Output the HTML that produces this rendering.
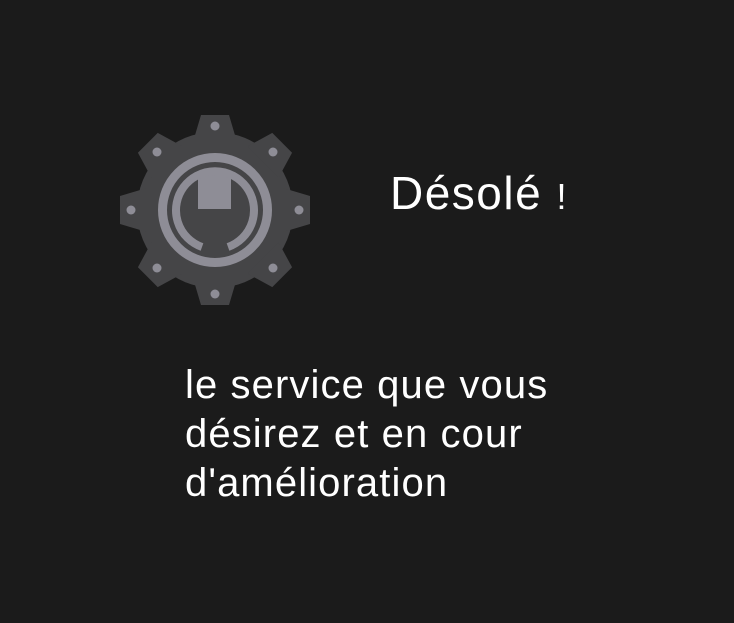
<!DOCTYPE html>
<html><head><meta charset="utf-8"><style>
html,body{margin:0;padding:0;background:#1b1b1b;width:734px;height:623px;overflow:hidden}
.t{position:absolute;color:#fff;font-family:"Liberation Sans",sans-serif;white-space:nowrap}
</style></head><body>
<svg width="734" height="623" style="position:absolute;left:0;top:0">
<g transform="translate(215,210)" fill="#454547">
<circle r="78"/>
<g id="tooth"><polygon points="-22,-68 22,-68 14,-95 -14,-95"/></g>
<use href="#tooth" transform="rotate(45)"/><use href="#tooth" transform="rotate(90)"/>
<use href="#tooth" transform="rotate(135)"/><use href="#tooth" transform="rotate(180)"/>
<use href="#tooth" transform="rotate(225)"/><use href="#tooth" transform="rotate(270)"/>
<use href="#tooth" transform="rotate(315)"/>
<g fill="#8e8d96">
<circle cx="0" cy="-84" r="4.5"/><circle cx="0" cy="84" r="4.5"/>
<circle cx="-84" cy="0" r="4.5"/><circle cx="84" cy="0" r="4.5"/>
<circle cx="-58" cy="-58" r="4.5"/><circle cx="58" cy="-58" r="4.5"/>
<circle cx="-58" cy="58" r="4.5"/><circle cx="58" cy="58" r="4.5"/>
<rect x="-17" y="-37" width="33" height="36"/>
</g>
<circle r="52.5" fill="none" stroke="#8e8d96" stroke-width="9"/>
<path d="M-13,37 A39,39 0 1 1 13,37" fill="none" stroke="#8e8d96" stroke-width="8"/>
</g>
</svg>
<div class="t" style="left:390px;top:166px;font-size:46px;letter-spacing:1.5px">Désolé <span style="font-size:36px">!</span></div>
<div class="t" style="left:185px;top:361px;font-size:40px;line-height:49px;letter-spacing:1.1px">le service que vous<br>désirez et en cour<br>d'amélioration</div>
</body></html>
